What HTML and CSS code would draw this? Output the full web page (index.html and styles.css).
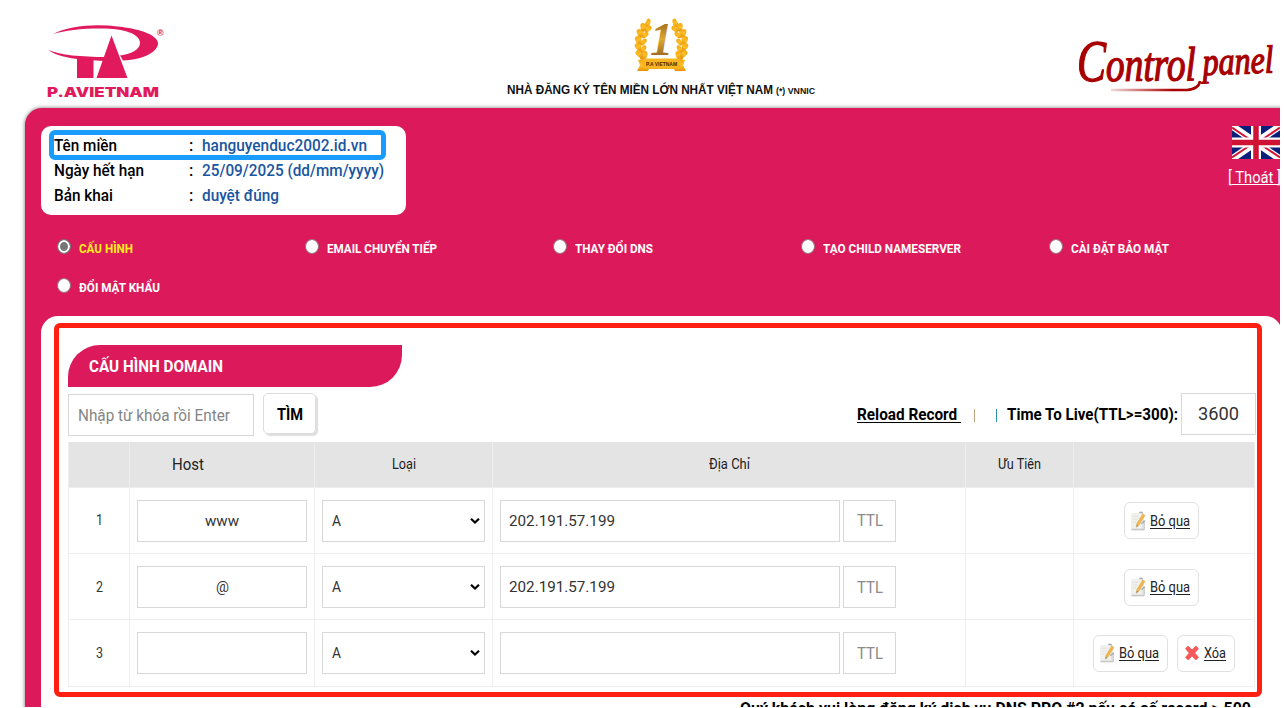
FILE: index.html
```html
<!DOCTYPE html>
<html lang="vi">
<head>
<meta charset="utf-8">
<title>Control panel</title>
<link rel="stylesheet" href="styles.css">
</head>
<body>
<svg class="defs" width="0" height="0">
  <defs>
    <linearGradient id="gold" x1="0" y1="0" x2="0" y2="1"><stop offset="0" stop-color="#f5a70c"/><stop offset=".55" stop-color="#fbc02b"/><stop offset="1" stop-color="#e99208"/></linearGradient>
    <linearGradient id="bronze" x1="0" y1="0" x2="0" y2="1"><stop offset="0" stop-color="#8a5212"/><stop offset=".5" stop-color="#dba836"/><stop offset="1" stop-color="#7d4711"/></linearGradient>
    <linearGradient id="swash" x1="0" y1="0" x2="1" y2="0"><stop offset="0" stop-color="#a80000" stop-opacity=".15"/><stop offset=".7" stop-color="#a80000"/></linearGradient>
    <symbol id="edit" viewBox="0 0 18 20">
      <path d="M1.500 3h13v16h-13z" fill="#e2e4e3"/><path d="M1.500 1.500h11v16h-11z" fill="#f0f0ed"/><path d="M1.500 19.300h13.500V9" fill="none" stroke="#b5b5b5"/><path d="M3 5h6M3 8h5M3 11h4" stroke="#e2e2e2"/>
      <path d="M13.500 2.500l2.400 1.500-6.200 10-3 2.500.6-3.800z" fill="#f2b54a" stroke="#e0ab50" stroke-width=".6"/><path d="M6.700 16.500l.5-2.400 1.500 1z" fill="#888"/><path d="M10 1.500c1-1.300 3-1 3.300.8M12 13l3.500-3" fill="none" stroke="#a9a9a9" stroke-width="1.400"/>
    </symbol>
    <symbol id="cross" viewBox="0 0 14 16">
      <path d="M3.200 1L7 5l3.800-4L13.500 3.700 9.700 8l3.800 4.300-2.700 2.700L7 11l-3.800 4L.5 12.300 4.300 8 .5 3.700z" fill="#f4595c" stroke="#f4595c" stroke-width=".8" stroke-linejoin="round"/>
    </symbol>
    <symbol id="chev" viewBox="0 0 10 8"><path d="M1 1.800L5 5.600l4-3.800" fill="none" stroke="#000" stroke-width="2.200"/></symbol>
  </defs>
</svg>
<div class="page">
  <header class="top">
    <svg class="logo" width="120" height="76" viewBox="0 0 120 76">
      <g fill="#e01a5c">
        <path d="M7 11C22 3 48 .5 72 3.500C96 6 113 13 112 21C111 30 95 37 77 37.500L74 32.500C86 31 94 26 94 20C94 11 79 5.500 55 5.500C34 5.500 19 7.500 7 11Z"/>
        <path d="M2.500 27C15 32 34 34 61 34L59 38C35 37 13 35 2.500 27Z"/>
        <path d="M31 34h16.500v21H31zM65.500 12.500L81.500 55h-31z"/>
        <text class="brand" x="1" y="73.500" textLength="112" lengthAdjust="spacingAndGlyphs">P.AVIETNAM</text>
        <text class="reg" x="111" y="12.500">®</text>
      </g>
    </svg>
    <div class="award">
      <svg width="56" height="58" viewBox="0 0 56 58">
        <g id="branch">
          <path d="M14 6C3 17 2 31 10 44" fill="none" stroke="url(#gold)" stroke-width="4.500"/>
          <g fill="url(#gold)">
            <ellipse cx="14" cy="6" rx="2.300" ry="4.500" transform="rotate(15 14 6)"/>
            <ellipse cx="9" cy="10" rx="2.600" ry="4" transform="rotate(-10 9 10)"/><ellipse cx="14" cy="12" rx="2.400" ry="4" transform="rotate(55 14 12)"/>
            <ellipse cx="5.500" cy="16" rx="2.600" ry="4" transform="rotate(-20 5.500 16)"/><ellipse cx="11" cy="18" rx="2.400" ry="4" transform="rotate(50 11 18)"/>
            <ellipse cx="4" cy="23" rx="2.600" ry="4" transform="rotate(-28 4 23)"/><ellipse cx="9.500" cy="25" rx="2.400" ry="4" transform="rotate(40 9.500 25)"/>
            <ellipse cx="4" cy="30" rx="2.600" ry="4" transform="rotate(-38 4 30)"/><ellipse cx="9.500" cy="32" rx="2.400" ry="4" transform="rotate(25 9.500 32)"/>
            <ellipse cx="5" cy="37" rx="2.600" ry="4" transform="rotate(-45 5 37)"/><ellipse cx="11" cy="38" rx="2.400" ry="4" transform="rotate(15 11 38)"/>
          </g>
        </g>
        <use href="#branch" transform="matrix(-1 0 0 1 55 0)"/>
        <path d="M4 43l6-1h35l6 1-2 5 3 6H41l-1-2H15l-1 2H3l3-6z" fill="url(#gold)"/>
        <path d="M9 41.500h37v10H9z" fill="#f7b51f"/>
        <text class="ribbon" x="12" y="49" textLength="31" lengthAdjust="spacingAndGlyphs">P.A VIETNAM</text>
        <text class="one" x="16" y="38" textLength="23" lengthAdjust="spacingAndGlyphs" fill="url(#bronze)">1</text>
      </svg>
      <div class="slogan"><span class="fit" data-w="266">NHÀ ĐĂNG KÝ TÊN MIỀN LỚN NHẤT VIỆT NAM</span><small class="fit" data-w="39">(*) VNNIC</small></div>
    </div>
    <svg class="script" width="204" height="64" viewBox="0 0 204 64">
      <g fill="#a80000" stroke="#a80000" stroke-width="1.300">
        <text class="brush" font-size="60" x="1" y="48" textLength="29" lengthAdjust="spacingAndGlyphs">C</text>
        <text class="brush" font-size="48" x="30" y="48" textLength="90" lengthAdjust="spacingAndGlyphs" transform="rotate(-.5 30 48)">ontrol</text>
        <text class="brush" font-size="39" x="127" y="42" textLength="71" lengthAdjust="spacingAndGlyphs" transform="rotate(-2 127 42)">panel</text>
      </g>
      <path d="M35 57q42 0 76 0q12-1 13-9" fill="none" stroke="url(#swash)" stroke-width="2.500"/>
    </svg>
  </header>

  <main class="shell">
    <div class="account">
      <dl class="info">
        <div class="row marked"><dt><span class="fit" data-w="63">Tên miền</span></dt><i>:</i><dd><span class="fit" data-w="165">hanguyenduc2002.id.vn</span></dd></div>
        <div class="row"><dt><span class="fit" data-w="90">Ngày hết hạn</span></dt><i>:</i><dd><span class="fit" data-w="182">25/09/2025 (dd/mm/yyyy)</span></dd></div>
        <div class="row"><dt><span class="fit" data-w="59">Bản khai</span></dt><i>:</i><dd><span class="fit" data-w="77">duyệt đúng</span></dd></div>
      </dl>
      <div class="side">
        <svg width="48" height="33" viewBox="0 0 48 33">
          <path fill="#0a1f7c" d="M0 0h48v33H0z"/><path d="M0 0l48 33M48 0L0 33" stroke="#fff" stroke-width="7"/><path d="M0 1.500l20 13.500M48 1.500L28 15M0 31.500L20 18M48 31.500L28 18" stroke="#d01334" stroke-width="2"/>
          <path d="M24 0v33M0 16.500h48" stroke="#fff" stroke-width="10"/><path d="M24 0v33M0 16.500h48" stroke="#d01334" stroke-width="5.500"/>
        </svg>
        <div class="logout"><span class="fit" data-w="53">[<u> Thoát </u>]</span></div>
      </div>
    </div>
    <nav class="menu">
      <label class="on"><b class="radio"></b><span class="fit" data-w="54">CẤU HÌNH</span></label>
      <label><b class="radio"></b><span class="fit" data-w="110">EMAIL CHUYỂN TIẾP</span></label>
      <label><b class="radio"></b><span class="fit" data-w="78">THAY ĐỔI DNS</span></label>
      <label><b class="radio"></b><span class="fit" data-w="138">TẠO CHILD NAMESERVER</span></label>
      <label><b class="radio"></b><span class="fit" data-w="98">CÀI ĐẶT BẢO MẬT</span></label>
      <label><b class="radio"></b><span class="fit" data-w="81">ĐỔI MẬT KHẨU</span></label>
    </nav>
    <section class="content">
      <div class="outline"></div>
      <h2 class="title"><span class="fit" data-w="134">CẤU HÌNH DOMAIN</span></h2>
      <div class="tools">
        <div class="field search"><span class="fit" data-w="152">Nhập từ khóa rồi Enter</span></div>
        <div class="find"><span class="fit" data-w="26">TÌM</span></div>
        <div class="ttlbar">
          <u class="fit reload" data-w="104">Reload Record&nbsp;</u><i class="bar tan"></i><i class="bar blue"></i>
          <span class="fit live" data-w="171">Time To Live(TTL&gt;=300):</span>
          <div class="field big"><span class="fit" data-w="41">3600</span></div>
        </div>
      </div>
      <div class="grid">
        <div class="tr head"><div></div><div class="host"><span class="fit" data-w="32">Host</span></div><div><span class="fit" data-w="24">Loại</span></div><div><span class="fit" data-w="41">Địa Chỉ</span></div><div><span class="fit" data-w="43">Ưu Tiên</span></div><div></div></div>
        <div class="tr"><div><span class="fit" data-w="7">1</span></div><div><div class="field name"><span class="fit" data-w="34">www</span></div></div><div><div class="field type"><span class="fit" data-w="9">A</span><svg width="10" height="8"><use href="#chev"/></svg></div></div><div class="addr"><div class="field ip"><span class="fit" data-w="106">202.191.57.199</span></div><div class="field ttl"><span class="fit" data-w="26">TTL</span></div></div><div></div><div class="act"><a class="btn"><svg width="17" height="20"><use href="#edit"/></svg><u class="fit" data-w="40">Bỏ qua</u></a></div></div>
        <div class="tr"><div><span class="fit" data-w="7">2</span></div><div><div class="field name"><span class="fit" data-w="13">@</span></div></div><div><div class="field type"><span class="fit" data-w="9">A</span><svg width="10" height="8"><use href="#chev"/></svg></div></div><div class="addr"><div class="field ip"><span class="fit" data-w="106">202.191.57.199</span></div><div class="field ttl"><span class="fit" data-w="26">TTL</span></div></div><div></div><div class="act"><a class="btn"><svg width="17" height="20"><use href="#edit"/></svg><u class="fit" data-w="40">Bỏ qua</u></a></div></div>
        <div class="tr"><div><span class="fit" data-w="7">3</span></div><div><div class="field name"></div></div><div><div class="field type"><span class="fit" data-w="9">A</span><svg width="10" height="8"><use href="#chev"/></svg></div></div><div class="addr"><div class="field ip"></div><div class="field ttl"><span class="fit" data-w="26">TTL</span></div></div><div></div><div class="act"><a class="btn"><svg width="17" height="20"><use href="#edit"/></svg><u class="fit" data-w="40">Bỏ qua</u></a><a class="btn del"><svg width="14" height="16"><use href="#cross"/></svg><u class="fit" data-w="22">Xóa</u></a></div></div>
      </div>
      <p class="note"><span class="fit" data-w="511">Quý khách vui lòng đăng ký dịch vụ DNS PRO #2 nếu có số record &gt; 500</span></p>
    </section>
  </main>
</div>
<script src="fit.js"></script>
</body>
</html>
```
FILE: styles.css
```css
* { box-sizing: border-box; }
body { margin: 0; background: #fff; font-family: Roboto, "Liberation Sans", sans-serif; color: #000; }
i { font-style: normal; }
.defs { position: absolute; }
.page { width: 1280px; height: 707px; overflow: hidden; }
.fit { display: inline-block; flex: none; white-space: nowrap; }
.fit-in { display: inline-block; transform-origin: 0 50%; white-space: pre; }
u.fit { text-decoration: none; }
u .fit-in { text-decoration: underline; text-underline-offset: 2px; }

/* header */
.top { height: 108px; display: flex; padding-left: 46px; }
.logo { margin-top: 23px; overflow: visible; flex: none; }
.brand { font: 900 13px Inter, "Liberation Sans", sans-serif; }
.reg { font: bold 9px "Liberation Sans", sans-serif; }
.award { flex: none; width: 309px; margin-left: 341px; padding-top: 17px; display: flex; flex-direction: column; align-items: flex-start; }
.award svg { margin-left: 127px; overflow: visible; }
.ribbon { font: bold 5px "Liberation Sans", sans-serif; fill: #4d2a00; }
.one { font: italic bold 46px "Liberation Serif", serif; }
.slogan { margin-top: 8px; display: flex; gap: 3px; align-items: baseline; font: bold 12px/15px "Liberation Sans", sans-serif; color: #111; }
.slogan small { font-size: 9px; }
.script { flex: none; margin: 33px 0 0 260px; overflow: visible; }
.brush { font-family: "Liberation Serif", serif; font-style: italic; }

/* pink shell */
.shell { margin-left: 25px; width: 1275px; height: 610px; background: #dc1a5b; border-radius: 17px 0 0 0; box-shadow: 0 0 4px #777; padding: 18px 0 0 16px; }
.account { display: flex; height: 90px; }
.info { margin: 0; width: 365px; height: 89px; background: #fff; border-radius: 10px; padding: 4px 0 0 8px; font-size: 16.5px; font-weight: 500; }
.row { display: flex; align-items: center; height: 25px; width: 337px; padding-left: 5px; }
.marked { height: 30px; border: 5px solid #1a9cff; border-radius: 6px; padding-left: 0; margin-bottom: -2px; }
.row dt { width: 135px; }
.row i { width: 13px; }
.row dd { margin: 0; color: #1a56a0; }
.side { margin-left: 822px; width: 54px; color: #fff; display: flex; flex-direction: column; align-items: flex-start; }
.side svg { margin-left: 4px; }
.logout { font-size: 16.5px; line-height: 20px; margin-top: 9px; }
.menu { display: grid; grid-template-columns: repeat(5, 248px); grid-auto-rows: 38.5px; padding-top: 12px; height: 100px; color: #fff; font-size: 13px; font-weight: 700; }
.menu label { display: flex; align-items: center; gap: 8px; padding-left: 16px; height: 38px; }
.menu .on { color: #ffee1c; }
.menu .fit { margin-top: 3px; }
.radio { width: 14px; height: 15px; border-radius: 50%; background: #fff; border: 1px solid #9b7380; margin-top: -1px; }
.on .radio { background: #777; border: 1px solid #777; box-shadow: inset 0 0 0 2px #fff; }

/* content */
.content { position: relative; width: 1241px; height: 400px; background: #fff; border-radius: 17px 17px 0 0; padding: 29px 0 0 27px; }
.outline { position: absolute; left: 13px; top: 7px; width: 1208px; height: 374px; border: 5px solid #ff2012; border-radius: 6px; }
.title { margin: 0; width: 334px; height: 42px; background: #dc1a5b; color: #fff; border-radius: 32px 0 32px 0; padding-left: 21px; font-size: 16.5px; line-height: 43px; font-weight: 700; }
.tools { display: flex; width: 1188px; height: 55px; padding-top: 6px; }
.field { border: 1px solid #d8d8d8; height: 42px; display: flex; align-items: center; background: #fff; }
.search { width: 186px; padding-left: 9px; margin-top: 1px; font-size: 16.5px; color: #858585; }
.find { margin-left: 9px; width: 53px; height: 41px; border: 1px solid #ddd; border-radius: 5px; box-shadow: 2px 2px 1px #dedede; display: flex; align-items: center; justify-content: center; font-size: 16px; font-weight: 700; padding-top: 2px; }
.ttlbar { margin-left: auto; display: flex; align-items: center; height: 42px; font-size: 16px; font-weight: 700; }
.ttlbar .fit { padding-top: 1px; }
.bar { width: 1px; height: 13px; margin-top: 3px; }
.tan { background: #bba27f; margin-left: 13px; }
.blue { background: #2b8fbe; margin: 3px 10px 0 21px; }
.big { width: 75px; margin-left: 3px; justify-content: center; font-size: 18px; font-weight: 400; color: #333; }
.ttlbar .big .fit { margin-top: -2px; }
.grid { width: 1187px; border-left: 1px solid #eee; border-right: 1px solid #eee; color: #333; }
.tr { display: grid; grid-template-columns: 60px 185px 178px 473px 108px 1fr; height: 66.4px; border-bottom: 1px solid #eee; }
.tr > div { display: flex; align-items: center; justify-content: center; border-left: 1px solid #eee; font-size: 14.5px; padding-top: 1px; }
.tr > div:first-child { border-left: 0; }
.head { height: 45.5px; background: #e4e4e4; color: #222; }
.tr > .host { font-size: 16px; padding-right: 69px; }
.name { width: 170px; justify-content: center; font-size: 15.5px; }
.type { width: 163px; justify-content: space-between; padding: 0 4px 0 9px; font-size: 15.5px; }
.tr > .addr { justify-content: flex-start; gap: 3px; padding-left: 7px; }
.ip { width: 340px; padding-left: 8px; font-size: 15.5px; }
.ttl { width: 53px; justify-content: center; font-size: 16px; color: #8a8a8a; }
.tr > .act { gap: 9px; padding-right: 6px; }
.tr > .act:has(.del) { padding-right: 0; }
.act { color: #222; }
.btn { width: 75px; height: 37px; border: 1px solid #e1e1e1; border-radius: 6px; display: flex; align-items: center; gap: 3px; padding-left: 5px; font-size: 15px; }
.del { width: 58px; padding-left: 7px; gap: 5px; }
.note { margin: 12px 0 0; padding-right: 31px; text-align: right; font-size: 16px; line-height: 20px; font-weight: 700; }
```
FILE: fit.js
```js
document.querySelectorAll('.fit').forEach(function (el) {
  var inner = document.createElement('span');
  inner.className = 'fit-in';
  while (el.firstChild) inner.appendChild(el.firstChild);
  el.appendChild(inner);
  var natural = inner.getBoundingClientRect().width;
  var width = Number(el.dataset.w);
  el.style.width = width + 'px';
  inner.style.transform = 'scaleX(' + width / natural + ')';
});
```
